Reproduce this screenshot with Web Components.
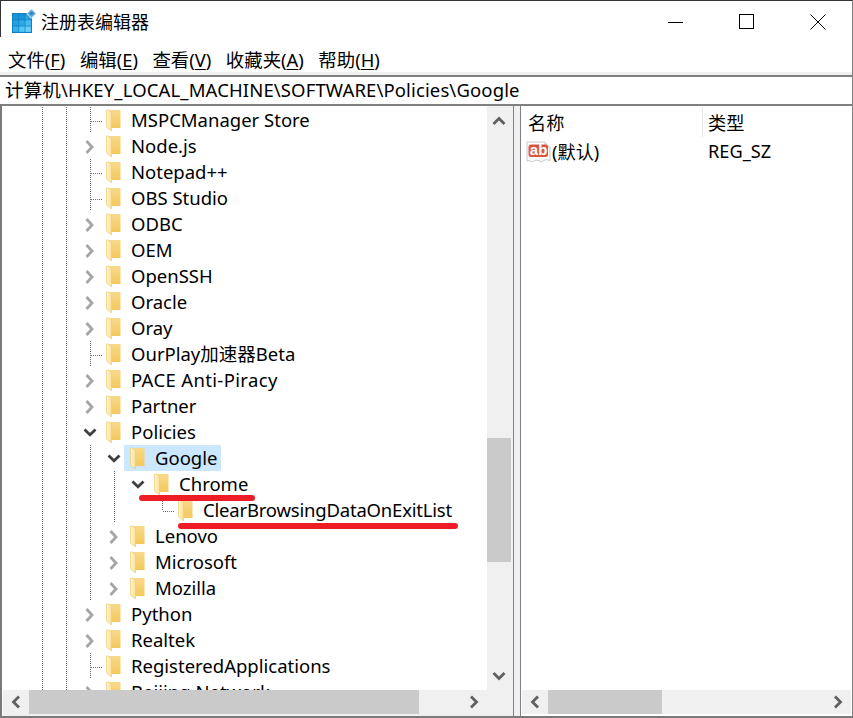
<!DOCTYPE html>
<html lang="zh">
<head>
<meta charset="utf-8">
<style>
html, body { margin: 0; padding: 0; height: 100%; background: #fff; overflow: hidden; }
body { font-family: "Noto Sans", "Noto Sans CJK SC", sans-serif; }
</style>
</head>
<body>
<regedit-window>
    <title-bar slot="title">注册表编辑器</title-bar>
    <menu-bar slot="menu"></menu-bar>
    <address-bar slot="address">计算机\HKEY_LOCAL_MACHINE\SOFTWARE\Policies\Google</address-bar>
    <tree-pane slot="tree"></tree-pane>
    <list-pane slot="list"></list-pane>
</regedit-window>

<script>
const FONT = '"Noto Sans", "Noto Sans CJK SC", sans-serif';
let folderId = 0;

function folderIcon() {
    const id = 'f' + (folderId++);
    return `<svg width="15" height="22" viewBox="0 0 15 22" style="display:block">
        <defs>
            <linearGradient id="${id}b" x1="0" y1="0" x2="0" y2="1"><stop offset="0" stop-color="#f8d98a"/><stop offset="1" stop-color="#f3c95f"/></linearGradient>
            <linearGradient id="${id}l" x1="0" y1="0" x2="1" y2="0"><stop offset="0" stop-color="#fff3c9"/><stop offset="1" stop-color="#fbe29a"/></linearGradient>
        </defs>
        <path d="M3 1H14.5V19H3Z" fill="url(#${id}b)"/>
        <path d="M.5 1H2.5L5.5 3.5V22L.5 18Z" fill="url(#${id}l)" stroke="#eccb78" stroke-width=".7"/>
    </svg>`;
}

class RegeditWindow extends HTMLElement {
    constructor() {
        super();
        this.attachShadow({ mode: 'open' });
        this.shadowRoot.innerHTML = `
            <style>
                :host { display: flex; flex-direction: column; width: 853px; height: 718px; box-sizing: border-box;
                    background: #fff; border-top: 1px solid #333; border-right: 1px solid #808080; border-bottom: 2px solid #7a7a7a; overflow: hidden; }
                .panes { flex: 1; min-height: 0; display: flex; border-top: 2px solid #808080; border-left: 2px solid #7a7a7a; }
                .split { width: 8px; flex: none; background: #f0f0f0; border-left: 1px solid #808088; border-right: 1px solid #808088; box-sizing: border-box; }
            </style>
            <slot name="title"></slot>
            <slot name="menu"></slot>
            <slot name="address"></slot>
            <div class="panes">
                <slot name="tree"></slot>
                <div class="split"></div>
                <slot name="list"></slot>
            </div>`;
    }
}

class TitleBar extends HTMLElement {
    constructor() {
        super();
        this.attachShadow({ mode: 'open' });
        this.shadowRoot.innerHTML = `
            <style>
                :host { display: flex; align-items: center; height: 43px; flex: none; font: 18px ${FONT}; color: #000;
                    background: linear-gradient(#333, #333) 0 0 / 1px 36px no-repeat; }
                .icon { margin-left: 12px; width: 24px; height: 24px; margin-top: -4px; flex: none; }
                .text { margin-left: 5px; flex: 1; margin-top: -3px; }
                .btns { display: flex; margin-top: -1px; margin-right: -1px; }
                .btn { width: 71px; height: 30px; display: flex; align-items: center; justify-content: center; }
            </style>
            <svg class="icon" viewBox="0 0 24 24">
                <rect x="0" y="4" width="20" height="20" fill="#0f7fc6"/>
                <rect x="1" y="5" width="5.5" height="5.5" fill="#1a94d6"/>
                <rect x="7.2" y="5" width="5.5" height="5.5" fill="#1a94d6"/>
                <rect x="13.4" y="5" width="5.5" height="5.5" fill="#2ba5e0"/>
                <rect x="1" y="11.2" width="5.5" height="5.5" fill="#21a0de"/>
                <rect x="7.2" y="11.2" width="5.5" height="5.5" fill="#2ba8e2"/>
                <rect x="13.4" y="11.2" width="5.5" height="5.5" fill="#45bbeb"/>
                <rect x="1" y="17.4" width="5.5" height="5.5" fill="#35b2e8"/>
                <rect x="7.2" y="17.4" width="5.5" height="5.5" fill="#55c6f0"/>
                <rect x="13.4" y="17.4" width="5.5" height="5.5" fill="#66d0f5"/>
                <rect x="16.2" y="1.2" width="6.6" height="6.6" fill="#5fa9d6" stroke="#fff" stroke-width=".8" transform="rotate(45 19.5 4.5)"/>
                <circle cx="19.5" cy="4.5" r="1.8" fill="#2a8cc8"/>
            </svg>
            <span class="text"><slot></slot></span>
            <div class="btns">
                <div class="btn"><svg width="16" height="16"><path d="M0 8.5H15" stroke="#000"/></svg></div>
                <div class="btn"><svg width="16" height="16"><rect x=".5" y=".5" width="14" height="14" fill="none" stroke="#000"/></svg></div>
                <div class="btn"><svg width="16" height="16"><path d="M.5 .5L15.5 15.5M15.5 .5L.5 15.5" stroke="#000"/></svg></div>
            </div>`;
    }
}

class MenuBar extends HTMLElement {
    constructor() {
        super();
        this.attachShadow({ mode: 'open' });
        const items = [['文件', 'F'], ['编辑', 'E'], ['查看', 'V'], ['收藏夹', 'A'], ['帮助', 'H']];
        this.shadowRoot.innerHTML = `
            <style>
                :host { display: flex; align-items: center; height: 31px; box-sizing: border-box; flex: none; padding: 0 0 2px 8px; gap: 14.5px; font: 18.4px ${FONT}; color: #000;
                    background: linear-gradient(#f0f0f0, #f0f0f0) 0 100% / 100% 3px no-repeat; }
                u { text-underline-offset: 2px; }
            </style>
            ${items.map(([t, k]) => `<span>${t}(<u>${k}</u>)</span>`).join('')}`;
    }
}

class AddressBar extends HTMLElement {
    constructor() {
        super();
        this.attachShadow({ mode: 'open' });
        this.shadowRoot.innerHTML = `
            <style>
                :host { display: flex; align-items: center; height: 29px; box-sizing: border-box; flex: none; padding: 0 0 3px 5px; font: 18.5px ${FONT}; letter-spacing: .13px; color: #000;
                    border-top: 2px solid #808080; white-space: nowrap; }
            </style>
            <slot></slot>`;
    }
}

class ScrollBar extends HTMLElement {
    constructor() {
        super();
        this.attachShadow({ mode: 'open' });
    }
    connectedCallback() {
        const vertical = this.getAttribute('dir') === 'v';
        const before = +this.getAttribute('before');
        const size = +this.getAttribute('size');
        const a = vertical ? 'M-5.5 3L0 -2.5L5.5 3' : 'M3 -5.5L-2.5 0L3 5.5';
        const b = vertical ? 'M-5.5 -3L0 2.5L5.5 -3' : 'M-3 -5.5L2.5 0L-3 5.5';
        const arrow = d => `<div class="arr"><svg width="24" height="24" viewBox="-12 -12 24 24"><path d="${d}" fill="none" stroke="#606060" stroke-width="2.8"/></svg></div>`;
        this.shadowRoot.innerHTML = `
            <style>
                :host { display: flex; flex: none; background: #f0f0f0; flex-direction: ${vertical ? 'column' : 'row'}; ${vertical ? 'width: 24px' : 'height: 24px'}; min-width: 0; }
                .arr { flex: none; display: flex; align-items: center; justify-content: center; ${vertical ? 'width: 24px; height: 30px' : 'width: 26px; height: 24px'}; }
                ${vertical ? '.arr:last-child { height: 28px; }' : ''}
                .track { flex: 1; min-width: 0; min-height: 0; display: flex; flex-direction: ${vertical ? 'column' : 'row'}; }
                .thumb { flex: none; background: #cacaca; ${vertical ? `margin-top: ${before}px; height: ${size}px` : `margin-left: ${before}px; width: ${size}px`}; }
            </style>
            ${arrow(a)}<div class="track"><div class="thumb"></div></div>${arrow(b)}`;
    }
}

class TreeRow extends HTMLElement {
    constructor() {
        super();
        this.attachShadow({ mode: 'open' });
    }
    connectedCallback() {
        // guides: one char per column, | line, space empty
        const guides = (this.getAttribute('guides') || '').split('');
        const exp = this.getAttribute('exp') || 'leaf';
        const selected = this.hasAttribute('selected');
        const last = this.hasAttribute('last');
        const spacing = this.getAttribute('spacing') || '0';
        let expander;
        if (exp === 'open') expander = `<svg width="24" height="26" viewBox="0 0 24 26"><path d="M6.5 10.5L12 15.8L17.5 10.5" fill="none" stroke="#404040" stroke-width="2.8"/></svg>`;
        else if (exp === 'closed') expander = `<svg width="24" height="26" viewBox="0 0 24 26"><path d="M8.5 8L14 14L8.5 20" fill="none" stroke="#a6a6a6" stroke-width="2.8"/></svg>`;
        else expander = `<i class="v ${last ? 'half' : ''}"></i><i class="h"></i>`;
        this.shadowRoot.innerHTML = `
            <style>
                :host { display: flex; align-items: center; height: 26px; flex: none; white-space: nowrap; }
                .cell { width: 24px; height: 26px; flex: none; position: relative; }
                .cell svg { display: block; }
                .v { position: absolute; left: 12px; top: 0; bottom: 0; width: 1px;
                    background: linear-gradient(#6f6f6f 50%, transparent 50%) 0 0 / 1px 2px; }
                .v.half { bottom: 12px; }
                .h { position: absolute; left: 13px; top: 14px; width: 11px; height: 1px;
                    background: linear-gradient(90deg, #6f6f6f 50%, transparent 50%) 0 0 / 2px 1px; }
                .icon { width: 15px; height: 22px; flex: none; }
                .label { display: flex; align-items: center; gap: 10px; height: 26px; margin-left: -2px; padding: 0 4px 0 6px; font: 18.5px ${FONT}; letter-spacing: ${spacing}px; color: #000; }
                .text { margin-top: -2px; }
                .sel { background: #cce8ff; }
            </style>
            ${guides.map(g => `<div class="cell">${g === '|' ? '<i class="v"></i>' : ''}</div>`).join('')}
            <div class="cell">${expander}</div>
            <div class="label ${selected ? 'sel' : ''}"><span class="icon">${folderIcon()}</span><span class="text"><slot></slot></span></div>`;
    }
}

class TreePane extends HTMLElement {
    constructor() {
        super();
        this.attachShadow({ mode: 'open' });
        const rows = [
            ['||', 'leaf', 'MSPCManager Store'], ['||', 'closed', 'Node.js'], ['||', 'leaf', 'Notepad++'],
            ['||', 'leaf', 'OBS Studio'], ['||', 'closed', 'ODBC'], ['||', 'closed', 'OEM'],
            ['||', 'closed', 'OpenSSH'], ['||', 'closed', 'Oracle'], ['||', 'closed', 'Oray'],
            ['||', 'leaf', 'OurPlay加速器Beta'], ['||', 'closed', 'PACE Anti-Piracy', 'spacing="0.35"'], ['||', 'closed', 'Partner'],
            ['||', 'open', 'Policies'], ['|||', 'open', 'Google', 'selected'], ['||||', 'open', 'Chrome'],
            ['|||| ', 'leaf', 'ClearBrowsingDataOnExitList', 'last spacing="-0.2"'], ['|||', 'closed', 'Lenovo'],
            ['|||', 'closed', 'Microsoft'], ['|||', 'closed', 'Mozilla'], ['||', 'closed', 'Python'],
            ['||', 'closed', 'Realtek'], ['||', 'leaf', 'RegisteredApplications'], ['||', 'closed', 'Beijing Network']
        ];
        this.shadowRoot.innerHTML = `
            <style>
                :host { display: grid; grid-template-columns: 485px 26px; grid-template-rows: 584px 24px 2px; width: 511px; flex: none; height: 100%; position: relative; }
                .view { overflow: hidden; padding: 1px 0 0 28px; display: flex; flex-direction: column; }
                .side { background: #f0f0f0; display: flex; }
                .hbar { grid-column: 1; grid-row: 2; margin-left: 1px; }
                .corner { background: #f0f0f0; grid-column: 2; grid-row: 2 / 4; }
                .strip { background: #f0f0f0; grid-column: 1; grid-row: 3; margin-left: 1px; }
                /* hand-drawn red marks lying over the tree */
                .mark { position: absolute; background: #ee1c25; border-radius: 3px; }
            </style>
            <div class="view">
                ${rows.map(([g, e, t, f]) => `<tree-row guides="${g}" exp="${e}" ${f || ''}>${t}</tree-row>`).join('')}
            </div>
            <div class="side"><scroll-bar dir="v" before="302" size="124"></scroll-bar></div>
            <scroll-bar class="hbar" dir="h" before="0" size="390"></scroll-bar>
            <div class="corner"></div>
            <div class="strip"></div>
            <div class="mark" style="left: 137px; top: 389px; width: 116px; height: 6px;"></div>
            <div class="mark" style="left: 176px; top: 417px; width: 280px; height: 6px;"></div>`;
    }
}

class ListPane extends HTMLElement {
    constructor() {
        super();
        this.attachShadow({ mode: 'open' });
        this.shadowRoot.innerHTML = `
            <style>
                :host { display: flex; flex-direction: column; flex: 1; min-width: 0; height: 100%; font: 18.2px ${FONT}; color: #000; }
                .head { display: grid; grid-template-columns: 181px 1fr; height: 32px; flex: none; }
                .head span { padding-left: 7px; display: flex; align-items: center; }
                .head span + span { padding-left: 5px; border-left: 1px solid #e5e5e5; margin-top: 1px; margin-bottom: 1px; }
                .row { display: grid; grid-template-columns: 187px 1fr; height: 26px; flex: none; align-items: center; }
                .row > div { display: flex; align-items: center; }
                .name { padding-left: 5px; }
                .body { flex: 1; }
                .bar { margin: 0 1px 2px 1px; }
                svg { flex: none; margin-right: 1px; }
                text { font: bold 15px "Liberation Sans", sans-serif; fill: #fff; }
            </style>
            <div class="head"><span>名称</span><span>类型</span></div>
            <div class="row">
                <div class="name"><svg width="25" height="23" viewBox="0 0 25 23">
                    <path d="M1 2H19L24 7V20.5L20 19.5L16 21.5L10 20L6 22L3 20.5L1 21Z" fill="#fff" stroke="#c8c8c8"/>
                    <path d="M19 2V7H24" fill="#eee" stroke="#c8c8c8"/>
                    <rect x="2.5" y="4.5" width="19.5" height="12.5" rx="2.5" fill="#d9583b"/>
                    <text x="3.8" y="15">ab</text>
                </svg>(默认)</div>
                <div>REG_SZ</div>
            </div>
            <div class="body"></div>
            <scroll-bar class="bar" dir="h" before="0" size="114"></scroll-bar>`;
    }
}

customElements.define('regedit-window', RegeditWindow);
customElements.define('title-bar', TitleBar);
customElements.define('menu-bar', MenuBar);
customElements.define('address-bar', AddressBar);
customElements.define('scroll-bar', ScrollBar);
customElements.define('tree-row', TreeRow);
customElements.define('tree-pane', TreePane);
customElements.define('list-pane', ListPane);
</script>
</body>
</html>
